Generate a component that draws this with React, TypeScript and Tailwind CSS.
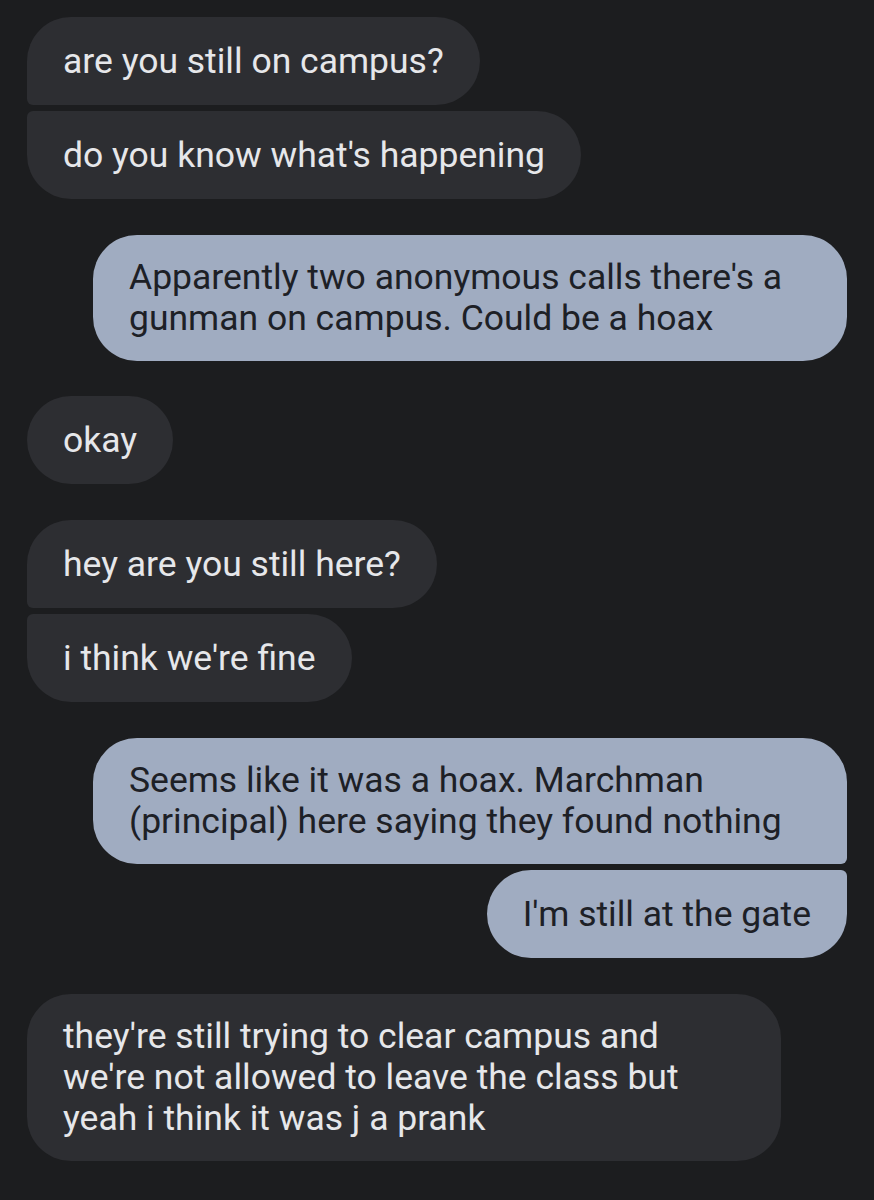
import React from "react";

type Msg = {
  side: "in" | "out";
  lines: string[];
  corners: string;
  gap: string;
  wide?: boolean;
};

const messages: Msg[] = [
  { side: "in", lines: ["are you still on campus?"], corners: "rounded-[44px] rounded-bl-[6px]", gap: "mt-0" },
  { side: "in", lines: ["do you know what's happening"], corners: "rounded-[44px] rounded-tl-[6px]", gap: "mt-[6px]" },
  {
    side: "out",
    lines: ["Apparently two anonymous calls there's a", "gunman on campus. Could be a hoax"],
    corners: "rounded-[44px]",
    gap: "mt-[36px]",
    wide: true
  },
  { side: "in", lines: ["okay"], corners: "rounded-[44px]", gap: "mt-[35px]" },
  { side: "in", lines: ["hey are you still here?"], corners: "rounded-[44px] rounded-bl-[6px]", gap: "mt-[36px]" },
  { side: "in", lines: ["i think we're fine"], corners: "rounded-[44px] rounded-tl-[6px]", gap: "mt-[6px]" },
  {
    side: "out",
    lines: ["Seems like it was a hoax. Marchman", "(principal) here saying they found nothing"],
    corners: "rounded-[44px] rounded-br-[6px]",
    gap: "mt-[36px]",
    wide: true
  },
  { side: "out", lines: ["I'm still at the gate"], corners: "rounded-[44px] rounded-tr-[6px]", gap: "mt-[6px]" },
  {
    side: "in",
    lines: ["they're still trying to clear campus and", "we're not allowed to leave the class but", "yeah i think it was j a prank"],
    corners: "rounded-[44px]",
    gap: "mt-[36px]",
    wide: true
  }
];

function Bubble({ msg }: { msg: Msg }) {
  const out = msg.side === "out";
  return (
    <div className={`flex ${out ? "justify-end" : "justify-start"} ${msg.gap}`}>
      <div
        className={`flex min-h-[88px] items-center px-9 py-[22px] text-[35.5px] leading-[41px] ${msg.corners} ${
          out ? "bg-[#a0acc1] text-[#1d2026]" : "bg-[#2d2e32] text-[#e6e7ea]"
        } ${msg.wide ? "w-[754px]" : "w-fit"}`}
      >
        <p className="whitespace-nowrap">
          {msg.lines.map((line, i) => (
            <React.Fragment key={i}>
              {i > 0 && <br />}
              {line}
            </React.Fragment>
          ))}
        </p>
      </div>
    </div>
  );
}

export default function App() {
  return (
    <div
      className="flex min-h-[1200px] w-[874px] flex-col bg-[#1c1d1f] px-[27px] pt-[17px]"
      style={{ fontFamily: "Roboto, 'Noto Sans', sans-serif" }}
    >
      {messages.map((m, i) => (
        <Bubble key={i} msg={m} />
      ))}
    </div>
  );
}
